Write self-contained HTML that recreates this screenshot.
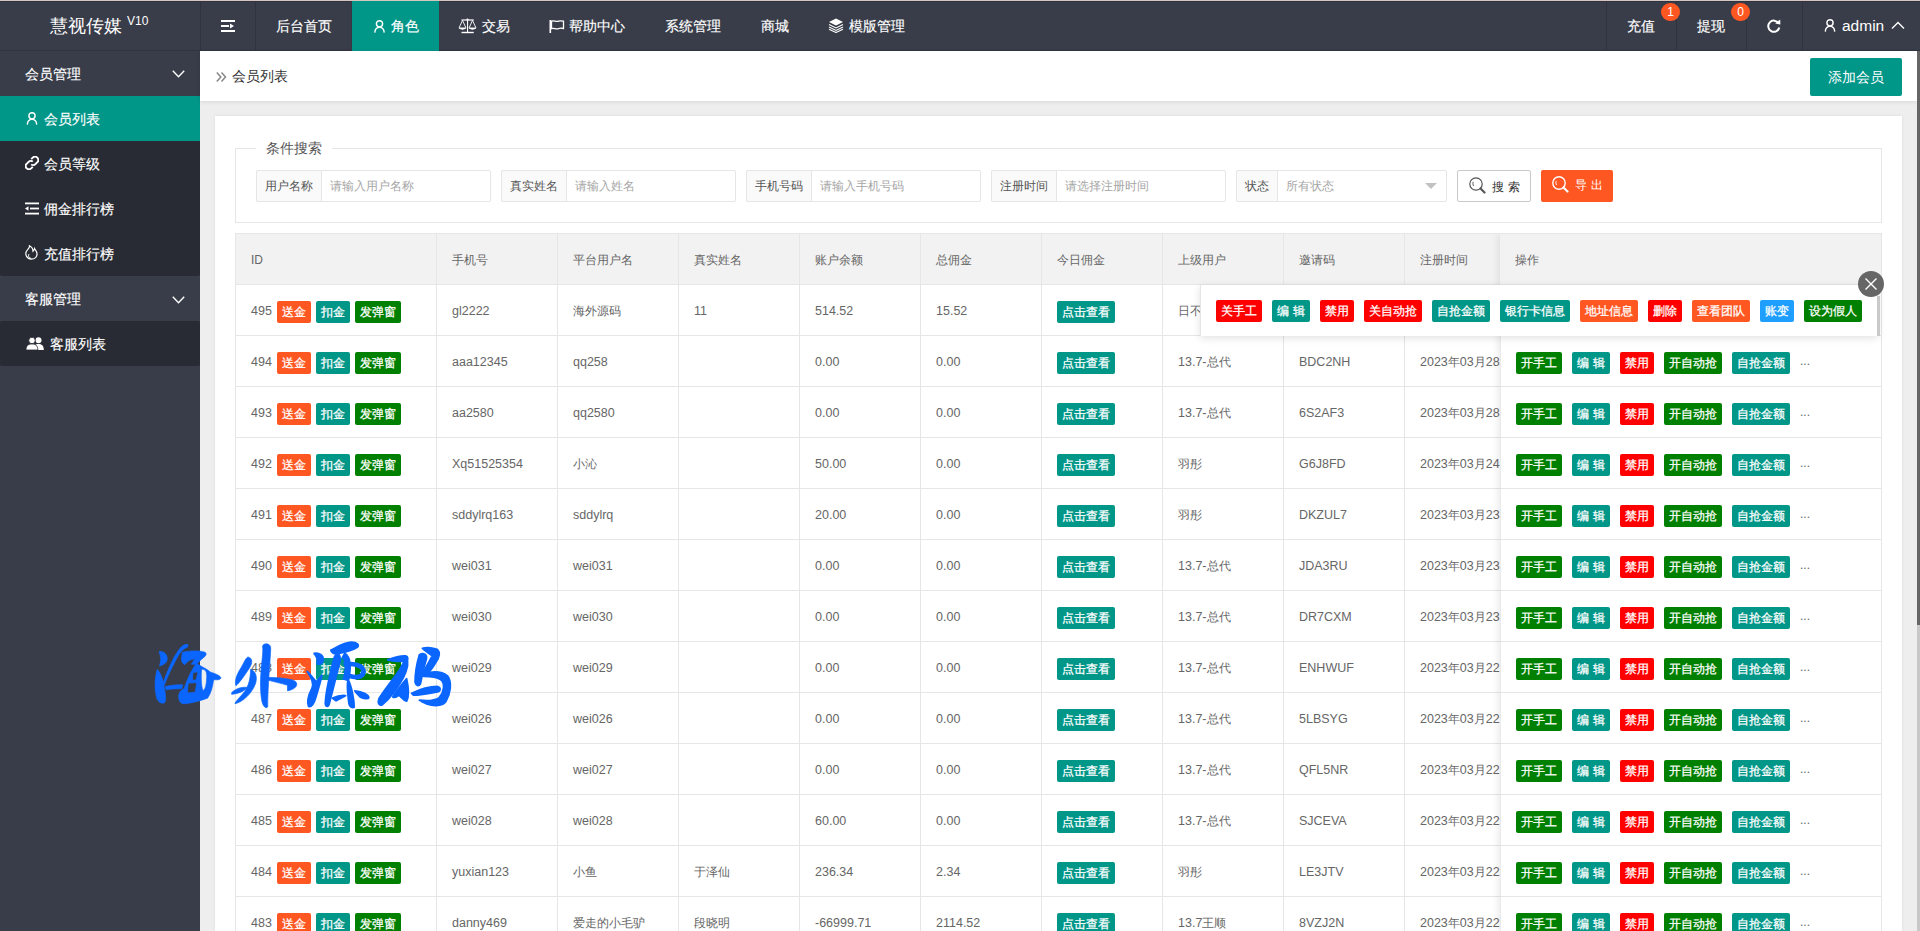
<!DOCTYPE html><html><head><meta charset='utf-8'><style>
*{margin:0;padding:0;box-sizing:border-box}
html,body{width:1920px;height:931px;overflow:hidden}
body{position:relative;background:#eeeeee;font-family:'Liberation Sans', sans-serif;color:#666;}
.a{position:absolute}
.t{position:absolute;white-space:nowrap}
.hd{color:#fff;font-size:14px;line-height:20px;-webkit-text-stroke:0.15px #fff}
.sb{color:#fff;font-size:14px;line-height:20px;-webkit-text-stroke:0.15px #fff}
.btn{position:absolute;height:22px;line-height:22px;font-size:12px;color:#fff;text-align:center;border-radius:2px;white-space:nowrap;-webkit-text-stroke:0.25px #fff}
.cell{position:absolute;font-size:12.5px;line-height:20px;color:#666;white-space:nowrap}
.hcell{position:absolute;font-size:12px;line-height:20px;color:#666;white-space:nowrap}
</style></head><body>
<div class='a' style='left:0;top:0;width:1920px;height:1px;background:#d6c6c0'></div>
<div class='a' style='left:0;top:1px;width:1920px;height:50px;background:#393D49'></div>
<div class='a' style='left:0;top:1px;width:1920px;height:1px;background:#2f3341'></div>
<div class='a' style='left:0;top:50px;width:1920px;height:1px;background:#30343f'></div>
<div class='t' style='left:50px;top:16px;font-size:18px;line-height:20px;color:#fff'>慧视传媒</div>
<div class='t' style='left:127px;top:11px;font-size:12px;line-height:20px;color:#fff'>V10</div>
<div class='a' style='left:200px;top:2px;width:1px;height:48px;background:#30333d'></div>
<div class='a' style='left:255px;top:2px;width:1px;height:48px;background:#30333d'></div>
<div class='a' style='left:1606px;top:2px;width:1px;height:48px;background:#30333d'></div>
<div class='a' style='left:1676px;top:2px;width:1px;height:48px;background:#30333d'></div>
<div class='a' style='left:1746px;top:2px;width:1px;height:48px;background:#30333d'></div>
<div class='a' style='left:1802px;top:2px;width:1px;height:48px;background:#30333d'></div>
<div class='a' style='left:351px;top:1px;width:1px;height:50px;background:#3a3444'></div>
<div class='a' style='left:352px;top:1px;width:87px;height:50px;background:#009688'></div>
<svg class='a' style='left:221px;top:19px' width='15' height='14' viewBox='0 0 15 14'>
<rect x='0' y='1' width='14' height='2' fill='#fff'/><rect x='0' y='6' width='8' height='2' fill='#fff'/>
<path d='M9 4.5 L13 7 L9 9.5Z' fill='#fff'/><rect x='0' y='11' width='14' height='2' fill='#fff'/></svg>
<div class='t hd' style='left:276px;top:16px'>后台首页</div>
<div class='t hd' style='left:391px;top:16px'>角色</div>
<div class='t hd' style='left:482px;top:16px'>交易</div>
<div class='t hd' style='left:569px;top:16px'>帮助中心</div>
<div class='t hd' style='left:665px;top:16px'>系统管理</div>
<div class='t hd' style='left:761px;top:16px'>商城</div>
<div class='t hd' style='left:849px;top:16px'>模版管理</div>
<div class='t hd' style='left:1627px;top:16px'>充值</div>
<div class='t hd' style='left:1697px;top:16px'>提现</div>
<svg class='a' style='left:374px;top:20px' width='11' height='13' viewBox='0 0 11 13'>
<circle cx='5.5' cy='3.8' r='3.1' fill='none' stroke='#fff' stroke-width='1.4'/>
<path d='M0.8 12.6 C1 8.8 3 7.4 5.5 7.4 C8 7.4 10 8.8 10.2 12.6' fill='none' stroke='#fff' stroke-width='1.4'/></svg>
<svg class='a' style='left:458px;top:18px' width='19' height='16' viewBox='0 0 19 16'>
<rect x='3.5' y='1.4' width='12.25' height='1.2' fill='#fff'/><circle cx='9.5' cy='1.6' r='1.1' fill='#fff'/>
<rect x='9' y='2' width='1.1' height='12' fill='#fff'/><rect x='3.5' y='13.8' width='12.25' height='1.4' fill='#fff'/>
<path d='M4.5 2.4 L1 10 H8Z' fill='none' stroke='#fff' stroke-width='0.9'/><path d='M0.6 10 Q4.5 13.4 8.4 10Z' fill='#fff'/>
<path d='M14.5 2.4 L11 10 H18Z' fill='none' stroke='#fff' stroke-width='0.9'/><path d='M10.6 10 Q14.5 13.4 18.4 10Z' fill='#fff'/>
</svg>
<svg class='a' style='left:549px;top:20px' width='16' height='13' viewBox='0 0 16 13'>
<rect x='0.5' y='0' width='1.6' height='13' fill='#fff'/>
<path d='M2.5 1.2 C5 0 7 2.2 9.5 1.2 C11 0.6 12.5 0.8 14.5 1.2 L14.5 8.5 C12.5 8 11 8 9.5 8.6 C7 9.6 5 7.6 2.5 8.6Z' fill='none' stroke='#fff' stroke-width='1.3'/>
</svg>
<svg class='a' style='left:828px;top:18px' width='16' height='15' viewBox='0 0 16 15'>
<path d='M8 0.5 L15 4 L8 7.5 L1 4Z' fill='#fff'/>
<path d='M1 6.5 L8 10 L15 6.5' fill='none' stroke='#fff' stroke-width='1.1'/>
<path d='M1 9 L8 12.5 L15 9' fill='none' stroke='#fff' stroke-width='1.1'/>
<path d='M1 11.2 L8 14.5 L15 11.2' fill='none' stroke='#fff' stroke-width='1.1'/>
</svg>
<div class='a' style='left:1661.0px;top:3px;width:19px;height:18px;border-radius:9.5px;background:#FF5722;color:#fff;font-size:12px;line-height:18px;text-align:center'>1</div>
<div class='a' style='left:1731.0px;top:3px;width:19px;height:18px;border-radius:9.5px;background:#FF5722;color:#fff;font-size:12px;line-height:18px;text-align:center'>0</div>
<svg class='a' style='left:1767px;top:19px' width='14' height='14' viewBox='0 0 14 14'>
<path d='M11.6 4.2 A5.6 5.6 0 1 0 12.3 8.6' fill='none' stroke='#fff' stroke-width='2'/>
<path d='M8.2 4.6 L13.4 5.6 L13.2 0.4Z' fill='#fff'/></svg>
<svg class='a' style='left:1824px;top:19px' width='12' height='13' viewBox='0 0 11 13'>
<circle cx='5.5' cy='3.8' r='3.1' fill='none' stroke='#fff' stroke-width='1.4'/>
<path d='M0.8 12.6 C1 8.8 3 7.4 5.5 7.4 C8 7.4 10 8.8 10.2 12.6' fill='none' stroke='#fff' stroke-width='1.4'/></svg>
<div class='t' style='left:1842px;top:16px;font-size:15.5px;line-height:20px;color:#fff'>admin</div>
<svg class='a' style='left:1891px;top:21px' width='14' height='9' viewBox='0 0 14 9'>
<path d='M1 7.5 L7 1.5 L13 7.5' fill='none' stroke='#fff' stroke-width='1.4'/></svg>
<div class='a' style='left:0;top:51px;width:200px;height:880px;background:#393D49'></div>
<div class='a' style='left:0;top:96px;width:200px;height:180px;background:#282b33;border-radius:2px'></div>
<div class='a' style='left:0;top:96px;width:200px;height:45px;background:#009688'></div>
<div class='a' style='left:0;top:321px;width:200px;height:45px;background:#282b33;border-radius:2px'></div>
<div class='t sb' style='left:25px;top:64px'>会员管理</div>
<svg class='a' style='left:172px;top:70px' width='13' height='8' viewBox='0 0 13 8'>
<path d='M0.8 0.8 L6.5 6.8 L12.2 0.8' fill='none' stroke='#fff' stroke-width='1.4'/></svg>
<div class='t sb' style='left:44px;top:109px'>会员列表</div>
<svg class='a' style='left:26px;top:112px' width='12' height='13' viewBox='0 0 11 13'>
<circle cx='5.5' cy='3.8' r='3.1' fill='none' stroke='#fff' stroke-width='1.4'/>
<path d='M0.8 12.6 C1 8.8 3 7.4 5.5 7.4 C8 7.4 10 8.8 10.2 12.6' fill='none' stroke='#fff' stroke-width='1.4'/></svg>
<div class='t sb' style='left:44px;top:154px'>会员等级</div>
<svg class='a' style='left:25px;top:156px' width='14' height='14' viewBox='0 0 14 14'>
<path d='M6.2 3.2 L7.8 1.6 C9 0.4 11 0.4 12.3 1.7 C13.6 3 13.6 5 12.4 6.2 L10.4 8.2 C9.2 9.4 7.2 9.4 6.2 8.4' fill='none' stroke='#fff' stroke-width='1.9'/>
<path d='M7.8 10.8 L6.2 12.4 C5 13.6 3 13.6 1.7 12.3 C0.4 11 0.4 9 1.6 7.8 L3.6 5.8 C4.8 4.6 6.8 4.6 7.8 5.6' fill='none' stroke='#fff' stroke-width='1.9'/></svg>
<div class='t sb' style='left:44px;top:199px'>佣金排行榜</div>
<svg class='a' style='left:25px;top:202px' width='14' height='13' viewBox='0 0 14 13'>
<rect x='0' y='0.5' width='14' height='1.8' fill='#fff'/><rect x='5' y='5.6' width='9' height='1.8' fill='#fff'/>
<path d='M0 6.5 L3.5 4.2 V8.8Z' fill='#fff'/><rect x='0' y='10.7' width='14' height='1.8' fill='#fff'/></svg>
<div class='t sb' style='left:44px;top:244px'>充值排行榜</div>
<svg class='a' style='left:25px;top:245px' width='13' height='15' viewBox='0 0 13 15'>
<path d='M4.5 0.8 C5 3 2.5 4 1.3 6.5 C0 9.5 1.6 14 6.5 14.2 C11 14.2 12.6 10.5 11.8 7.5 C11.3 5.5 10 4.5 9.5 3.5 C9.2 5 8.8 5.8 8 6.3 C8 3.8 6.8 2 4.5 0.8Z' fill='none' stroke='#fff' stroke-width='1.2'/>
<path d='M4 9 C3 10.5 3.5 13 6.2 13.5' fill='none' stroke='#fff' stroke-width='1'/></svg>
<div class='t sb' style='left:25px;top:289px'>客服管理</div>
<svg class='a' style='left:172px;top:296px' width='13' height='8' viewBox='0 0 13 8'>
<path d='M0.8 0.8 L6.5 6.8 L12.2 0.8' fill='none' stroke='#fff' stroke-width='1.4'/></svg>
<div class='t sb' style='left:50px;top:334px'>客服列表</div>
<svg class='a' style='left:26px;top:337px' width='19' height='13' viewBox='0 0 19 13'>
<circle cx='12.5' cy='3.3' r='3' fill='#fff'/><path d='M7.5 13 C7.5 8.5 9.5 7 12.5 7 C15.5 7 17.8 8.5 17.8 13Z' fill='#fff'/>
<circle cx='6' cy='3.5' r='3.2' fill='#fff' stroke='#282b33' stroke-width='0.8'/><path d='M0 13 C0 8.5 2.5 7 6 7 C9.5 7 11.8 8.5 11.8 13Z' fill='#fff' stroke='#282b33' stroke-width='0.8'/></svg>
<div class='a' style='left:200px;top:51px;width:1717px;height:50px;background:#fff;box-shadow:0 1px 4px rgba(0,0,0,.10)'></div>
<svg class='a' style='left:216px;top:72px' width='11' height='10' viewBox='0 0 11 10'>
<path d='M0.8 0.5 L4.8 5 L0.8 9.5 M5.5 0.5 L9.5 5 L5.5 9.5' fill='none' stroke='#888' stroke-width='1.5'/></svg>
<div class='t' style='left:232px;top:66px;font-size:14px;line-height:20px;color:#333'>会员列表</div>
<div class='a' style='left:1810px;top:58px;width:92px;height:38px;background:#009688;border-radius:2px;color:#fff;font-size:14px;line-height:38px;text-align:center'>添加会员</div>
<div class='a' style='left:215px;top:116px;width:1687px;height:815px;background:#fff;box-shadow:0 0 3px rgba(0,0,0,.08)'></div>
<div class='a' style='left:235px;top:148px;width:1647px;height:75px;border:1px solid #e6e6e6'></div>
<div class='a' style='left:256px;top:140px;width:76px;height:16px;background:#fff'></div>
<div class='t' style='left:266px;top:138px;font-size:14px;line-height:20px;color:#555'>条件搜索</div>
<div class='a' style='left:256px;top:170px;width:235px;height:32px;border:1px solid #e6e6e6;border-radius:2px;background:#fff'></div>
<div class='a' style='left:256px;top:170px;width:66px;height:32px;border:1px solid #e6e6e6;border-radius:2px 0 0 2px;background:#fafafa'></div>
<div class='t' style='left:265px;top:176px;font-size:12px;line-height:20px;color:#555'>用户名称</div>
<div class='t' style='left:330px;top:176px;font-size:12px;line-height:20px;color:#a6a6a6'>请输入用户名称</div>
<div class='a' style='left:501px;top:170px;width:235px;height:32px;border:1px solid #e6e6e6;border-radius:2px;background:#fff'></div>
<div class='a' style='left:501px;top:170px;width:66px;height:32px;border:1px solid #e6e6e6;border-radius:2px 0 0 2px;background:#fafafa'></div>
<div class='t' style='left:510px;top:176px;font-size:12px;line-height:20px;color:#555'>真实姓名</div>
<div class='t' style='left:575px;top:176px;font-size:12px;line-height:20px;color:#a6a6a6'>请输入姓名</div>
<div class='a' style='left:746px;top:170px;width:235px;height:32px;border:1px solid #e6e6e6;border-radius:2px;background:#fff'></div>
<div class='a' style='left:746px;top:170px;width:66px;height:32px;border:1px solid #e6e6e6;border-radius:2px 0 0 2px;background:#fafafa'></div>
<div class='t' style='left:755px;top:176px;font-size:12px;line-height:20px;color:#555'>手机号码</div>
<div class='t' style='left:820px;top:176px;font-size:12px;line-height:20px;color:#a6a6a6'>请输入手机号码</div>
<div class='a' style='left:991px;top:170px;width:235px;height:32px;border:1px solid #e6e6e6;border-radius:2px;background:#fff'></div>
<div class='a' style='left:991px;top:170px;width:66px;height:32px;border:1px solid #e6e6e6;border-radius:2px 0 0 2px;background:#fafafa'></div>
<div class='t' style='left:1000px;top:176px;font-size:12px;line-height:20px;color:#555'>注册时间</div>
<div class='t' style='left:1065px;top:176px;font-size:12px;line-height:20px;color:#a6a6a6'>请选择注册时间</div>
<div class='a' style='left:1236px;top:170px;width:211px;height:32px;border:1px solid #e6e6e6;border-radius:2px;background:#fff'></div>
<div class='a' style='left:1236px;top:170px;width:42px;height:32px;border:1px solid #e6e6e6;border-radius:2px 0 0 2px;background:#fafafa'></div>
<div class='t' style='left:1245px;top:176px;font-size:12px;line-height:20px;color:#555'>状态</div>
<div class='t' style='left:1286px;top:176px;font-size:12px;line-height:20px;color:#a6a6a6'>所有状态</div>
<svg class='a' style='left:1425px;top:183px' width='12' height='6' viewBox='0 0 12 6'><path d='M0 0 H12 L6 6Z' fill='#c2c2c2'/></svg>
<div class='a' style='left:1457px;top:170px;width:74px;height:32px;border:1px solid #c9c9c9;border-radius:2px;background:#fff'></div>
<svg class='a' style='left:1469px;top:177px' width='17' height='17' viewBox='0 0 17 17'>
<circle cx='7' cy='7' r='6.2' fill='none' stroke='#555' stroke-width='1.2'/>
<path d='M11.5 11.5 L15.5 15.5' stroke='#555' stroke-width='2.2' stroke-linecap='round'/>
<path d='M4.2 4.8 Q3.2 7 4.6 9' fill='none' stroke='#555' stroke-width='0.9'/></svg>
<div class='t' style='left:1492px;top:177px;font-size:12px;line-height:20px;color:#333;letter-spacing:4px'>搜索</div>
<div class='a' style='left:1541px;top:170px;width:72px;height:32px;border-radius:2px;background:#FF5722'></div>
<svg class='a' style='left:1552px;top:176px' width='17' height='17' viewBox='0 0 17 17'>
<circle cx='7' cy='7' r='6.2' fill='none' stroke='#fff' stroke-width='1.4'/>
<path d='M11.5 11.5 L15.5 15.5' stroke='#fff' stroke-width='2.2' stroke-linecap='round'/>
<path d='M4.2 4.8 Q3.2 7 4.6 9' fill='none' stroke='#fff' stroke-width='0.9'/></svg>
<div class='t' style='left:1575px;top:175px;font-size:12px;line-height:20px;color:#fff;letter-spacing:4px'>导出</div>
<div class='a' style='left:235px;top:233px;width:1647px;height:698px;border:1px solid #e6e6e6;border-bottom:none;background:#fff;overflow:hidden'>
<div class='a' style='left:0;top:0;width:100%;height:50px;background:#f2f2f2'></div>
<div class='a' style='left:0;top:50px;width:100%;height:1px;background:#e6e6e6'></div>
<div class='a' style='left:0;top:101px;width:100%;height:1px;background:#e6e6e6'></div>
<div class='a' style='left:0;top:152px;width:100%;height:1px;background:#e6e6e6'></div>
<div class='a' style='left:0;top:203px;width:100%;height:1px;background:#e6e6e6'></div>
<div class='a' style='left:0;top:254px;width:100%;height:1px;background:#e6e6e6'></div>
<div class='a' style='left:0;top:305px;width:100%;height:1px;background:#e6e6e6'></div>
<div class='a' style='left:0;top:356px;width:100%;height:1px;background:#e6e6e6'></div>
<div class='a' style='left:0;top:407px;width:100%;height:1px;background:#e6e6e6'></div>
<div class='a' style='left:0;top:458px;width:100%;height:1px;background:#e6e6e6'></div>
<div class='a' style='left:0;top:509px;width:100%;height:1px;background:#e6e6e6'></div>
<div class='a' style='left:0;top:560px;width:100%;height:1px;background:#e6e6e6'></div>
<div class='a' style='left:0;top:611px;width:100%;height:1px;background:#e6e6e6'></div>
<div class='a' style='left:0;top:662px;width:100%;height:1px;background:#e6e6e6'></div>
<div class='a' style='left:0;top:713px;width:100%;height:1px;background:#e6e6e6'></div>
<div class='a' style='left:200px;top:0;width:1px;height:100%;background:#e6e6e6'></div>
<div class='a' style='left:321px;top:0;width:1px;height:100%;background:#e6e6e6'></div>
<div class='a' style='left:442px;top:0;width:1px;height:100%;background:#e6e6e6'></div>
<div class='a' style='left:563px;top:0;width:1px;height:100%;background:#e6e6e6'></div>
<div class='a' style='left:684px;top:0;width:1px;height:100%;background:#e6e6e6'></div>
<div class='a' style='left:805px;top:0;width:1px;height:100%;background:#e6e6e6'></div>
<div class='a' style='left:926px;top:0;width:1px;height:100%;background:#e6e6e6'></div>
<div class='a' style='left:1047px;top:0;width:1px;height:100%;background:#e6e6e6'></div>
<div class='a' style='left:1168px;top:0;width:1px;height:100%;background:#e6e6e6'></div>
<div class='a' style='left:1289px;top:0;width:1px;height:100%;background:#e6e6e6'></div>
<div class='hcell' style='left:15px;top:16px'>ID</div>
<div class='hcell' style='left:216px;top:16px'>手机号</div>
<div class='hcell' style='left:337px;top:16px'>平台用户名</div>
<div class='hcell' style='left:458px;top:16px'>真实姓名</div>
<div class='hcell' style='left:579px;top:16px'>账户余额</div>
<div class='hcell' style='left:700px;top:16px'>总佣金</div>
<div class='hcell' style='left:821px;top:16px'>今日佣金</div>
<div class='hcell' style='left:942px;top:16px'>上级用户</div>
<div class='hcell' style='left:1063px;top:16px'>邀请码</div>
<div class='hcell' style='left:1184px;top:16px'>注册时间</div>
<div class='cell' style='left:15px;top:67px'>495</div>
<div class='btn' style='left:41px;top:67px;width:34px;background:#FF5722'>送金</div>
<div class='btn' style='left:80px;top:67px;width:34px;background:#009688'>扣金</div>
<div class='btn' style='left:119px;top:67px;width:46px;background:#008000'>发弹窗</div>
<div class='cell' style='left:216px;top:67px'>gl2222</div>
<div class='cell' style='left:337px;top:67px'><span style='font-size:12px'>海外源码</span></div>
<div class='cell' style='left:458px;top:67px'>11</div>
<div class='cell' style='left:579px;top:67px'>514.52</div>
<div class='cell' style='left:700px;top:67px'>15.52</div>
<div class='btn' style='left:821px;top:67px;width:58px;background:#009688'>点击查看</div>
<div class='cell' style='left:942px;top:67px'><span style='font-size:12px'>日不落</span></div>
<div class='cell' style='left:15px;top:118px'>494</div>
<div class='btn' style='left:41px;top:118px;width:34px;background:#FF5722'>送金</div>
<div class='btn' style='left:80px;top:118px;width:34px;background:#009688'>扣金</div>
<div class='btn' style='left:119px;top:118px;width:46px;background:#008000'>发弹窗</div>
<div class='cell' style='left:216px;top:118px'>aaa12345</div>
<div class='cell' style='left:337px;top:118px'>qq258</div>
<div class='cell' style='left:579px;top:118px'>0.00</div>
<div class='cell' style='left:700px;top:118px'>0.00</div>
<div class='btn' style='left:821px;top:118px;width:58px;background:#009688'>点击查看</div>
<div class='cell' style='left:942px;top:118px'>13.7-<span style='font-size:12px'>总代</span></div>
<div class='cell' style='left:1063px;top:118px'>BDC2NH</div>
<div class='cell' style='left:1184px;top:118px'>2023<span style='font-size:12px'>年</span>03<span style='font-size:12px'>月</span>28</div>
<div class='cell' style='left:15px;top:169px'>493</div>
<div class='btn' style='left:41px;top:169px;width:34px;background:#FF5722'>送金</div>
<div class='btn' style='left:80px;top:169px;width:34px;background:#009688'>扣金</div>
<div class='btn' style='left:119px;top:169px;width:46px;background:#008000'>发弹窗</div>
<div class='cell' style='left:216px;top:169px'>aa2580</div>
<div class='cell' style='left:337px;top:169px'>qq2580</div>
<div class='cell' style='left:579px;top:169px'>0.00</div>
<div class='cell' style='left:700px;top:169px'>0.00</div>
<div class='btn' style='left:821px;top:169px;width:58px;background:#009688'>点击查看</div>
<div class='cell' style='left:942px;top:169px'>13.7-<span style='font-size:12px'>总代</span></div>
<div class='cell' style='left:1063px;top:169px'>6S2AF3</div>
<div class='cell' style='left:1184px;top:169px'>2023<span style='font-size:12px'>年</span>03<span style='font-size:12px'>月</span>28</div>
<div class='cell' style='left:15px;top:220px'>492</div>
<div class='btn' style='left:41px;top:220px;width:34px;background:#FF5722'>送金</div>
<div class='btn' style='left:80px;top:220px;width:34px;background:#009688'>扣金</div>
<div class='btn' style='left:119px;top:220px;width:46px;background:#008000'>发弹窗</div>
<div class='cell' style='left:216px;top:220px'>Xq51525354</div>
<div class='cell' style='left:337px;top:220px'><span style='font-size:12px'>小沁</span></div>
<div class='cell' style='left:579px;top:220px'>50.00</div>
<div class='cell' style='left:700px;top:220px'>0.00</div>
<div class='btn' style='left:821px;top:220px;width:58px;background:#009688'>点击查看</div>
<div class='cell' style='left:942px;top:220px'><span style='font-size:12px'>羽彤</span></div>
<div class='cell' style='left:1063px;top:220px'>G6J8FD</div>
<div class='cell' style='left:1184px;top:220px'>2023<span style='font-size:12px'>年</span>03<span style='font-size:12px'>月</span>24</div>
<div class='cell' style='left:15px;top:271px'>491</div>
<div class='btn' style='left:41px;top:271px;width:34px;background:#FF5722'>送金</div>
<div class='btn' style='left:80px;top:271px;width:34px;background:#009688'>扣金</div>
<div class='btn' style='left:119px;top:271px;width:46px;background:#008000'>发弹窗</div>
<div class='cell' style='left:216px;top:271px'>sddylrq163</div>
<div class='cell' style='left:337px;top:271px'>sddylrq</div>
<div class='cell' style='left:579px;top:271px'>20.00</div>
<div class='cell' style='left:700px;top:271px'>0.00</div>
<div class='btn' style='left:821px;top:271px;width:58px;background:#009688'>点击查看</div>
<div class='cell' style='left:942px;top:271px'><span style='font-size:12px'>羽彤</span></div>
<div class='cell' style='left:1063px;top:271px'>DKZUL7</div>
<div class='cell' style='left:1184px;top:271px'>2023<span style='font-size:12px'>年</span>03<span style='font-size:12px'>月</span>23</div>
<div class='cell' style='left:15px;top:322px'>490</div>
<div class='btn' style='left:41px;top:322px;width:34px;background:#FF5722'>送金</div>
<div class='btn' style='left:80px;top:322px;width:34px;background:#009688'>扣金</div>
<div class='btn' style='left:119px;top:322px;width:46px;background:#008000'>发弹窗</div>
<div class='cell' style='left:216px;top:322px'>wei031</div>
<div class='cell' style='left:337px;top:322px'>wei031</div>
<div class='cell' style='left:579px;top:322px'>0.00</div>
<div class='cell' style='left:700px;top:322px'>0.00</div>
<div class='btn' style='left:821px;top:322px;width:58px;background:#009688'>点击查看</div>
<div class='cell' style='left:942px;top:322px'>13.7-<span style='font-size:12px'>总代</span></div>
<div class='cell' style='left:1063px;top:322px'>JDA3RU</div>
<div class='cell' style='left:1184px;top:322px'>2023<span style='font-size:12px'>年</span>03<span style='font-size:12px'>月</span>23</div>
<div class='cell' style='left:15px;top:373px'>489</div>
<div class='btn' style='left:41px;top:373px;width:34px;background:#FF5722'>送金</div>
<div class='btn' style='left:80px;top:373px;width:34px;background:#009688'>扣金</div>
<div class='btn' style='left:119px;top:373px;width:46px;background:#008000'>发弹窗</div>
<div class='cell' style='left:216px;top:373px'>wei030</div>
<div class='cell' style='left:337px;top:373px'>wei030</div>
<div class='cell' style='left:579px;top:373px'>0.00</div>
<div class='cell' style='left:700px;top:373px'>0.00</div>
<div class='btn' style='left:821px;top:373px;width:58px;background:#009688'>点击查看</div>
<div class='cell' style='left:942px;top:373px'>13.7-<span style='font-size:12px'>总代</span></div>
<div class='cell' style='left:1063px;top:373px'>DR7CXM</div>
<div class='cell' style='left:1184px;top:373px'>2023<span style='font-size:12px'>年</span>03<span style='font-size:12px'>月</span>23</div>
<div class='cell' style='left:15px;top:424px'>488</div>
<div class='btn' style='left:41px;top:424px;width:34px;background:#FF5722'>送金</div>
<div class='btn' style='left:80px;top:424px;width:34px;background:#009688'>扣金</div>
<div class='btn' style='left:119px;top:424px;width:46px;background:#008000'>发弹窗</div>
<div class='cell' style='left:216px;top:424px'>wei029</div>
<div class='cell' style='left:337px;top:424px'>wei029</div>
<div class='cell' style='left:579px;top:424px'>0.00</div>
<div class='cell' style='left:700px;top:424px'>0.00</div>
<div class='btn' style='left:821px;top:424px;width:58px;background:#009688'>点击查看</div>
<div class='cell' style='left:942px;top:424px'>13.7-<span style='font-size:12px'>总代</span></div>
<div class='cell' style='left:1063px;top:424px'>ENHWUF</div>
<div class='cell' style='left:1184px;top:424px'>2023<span style='font-size:12px'>年</span>03<span style='font-size:12px'>月</span>22</div>
<div class='cell' style='left:15px;top:475px'>487</div>
<div class='btn' style='left:41px;top:475px;width:34px;background:#FF5722'>送金</div>
<div class='btn' style='left:80px;top:475px;width:34px;background:#009688'>扣金</div>
<div class='btn' style='left:119px;top:475px;width:46px;background:#008000'>发弹窗</div>
<div class='cell' style='left:216px;top:475px'>wei026</div>
<div class='cell' style='left:337px;top:475px'>wei026</div>
<div class='cell' style='left:579px;top:475px'>0.00</div>
<div class='cell' style='left:700px;top:475px'>0.00</div>
<div class='btn' style='left:821px;top:475px;width:58px;background:#009688'>点击查看</div>
<div class='cell' style='left:942px;top:475px'>13.7-<span style='font-size:12px'>总代</span></div>
<div class='cell' style='left:1063px;top:475px'>5LBSYG</div>
<div class='cell' style='left:1184px;top:475px'>2023<span style='font-size:12px'>年</span>03<span style='font-size:12px'>月</span>22</div>
<div class='cell' style='left:15px;top:526px'>486</div>
<div class='btn' style='left:41px;top:526px;width:34px;background:#FF5722'>送金</div>
<div class='btn' style='left:80px;top:526px;width:34px;background:#009688'>扣金</div>
<div class='btn' style='left:119px;top:526px;width:46px;background:#008000'>发弹窗</div>
<div class='cell' style='left:216px;top:526px'>wei027</div>
<div class='cell' style='left:337px;top:526px'>wei027</div>
<div class='cell' style='left:579px;top:526px'>0.00</div>
<div class='cell' style='left:700px;top:526px'>0.00</div>
<div class='btn' style='left:821px;top:526px;width:58px;background:#009688'>点击查看</div>
<div class='cell' style='left:942px;top:526px'>13.7-<span style='font-size:12px'>总代</span></div>
<div class='cell' style='left:1063px;top:526px'>QFL5NR</div>
<div class='cell' style='left:1184px;top:526px'>2023<span style='font-size:12px'>年</span>03<span style='font-size:12px'>月</span>22</div>
<div class='cell' style='left:15px;top:577px'>485</div>
<div class='btn' style='left:41px;top:577px;width:34px;background:#FF5722'>送金</div>
<div class='btn' style='left:80px;top:577px;width:34px;background:#009688'>扣金</div>
<div class='btn' style='left:119px;top:577px;width:46px;background:#008000'>发弹窗</div>
<div class='cell' style='left:216px;top:577px'>wei028</div>
<div class='cell' style='left:337px;top:577px'>wei028</div>
<div class='cell' style='left:579px;top:577px'>60.00</div>
<div class='cell' style='left:700px;top:577px'>0.00</div>
<div class='btn' style='left:821px;top:577px;width:58px;background:#009688'>点击查看</div>
<div class='cell' style='left:942px;top:577px'>13.7-<span style='font-size:12px'>总代</span></div>
<div class='cell' style='left:1063px;top:577px'>SJCEVA</div>
<div class='cell' style='left:1184px;top:577px'>2023<span style='font-size:12px'>年</span>03<span style='font-size:12px'>月</span>22</div>
<div class='cell' style='left:15px;top:628px'>484</div>
<div class='btn' style='left:41px;top:628px;width:34px;background:#FF5722'>送金</div>
<div class='btn' style='left:80px;top:628px;width:34px;background:#009688'>扣金</div>
<div class='btn' style='left:119px;top:628px;width:46px;background:#008000'>发弹窗</div>
<div class='cell' style='left:216px;top:628px'>yuxian123</div>
<div class='cell' style='left:337px;top:628px'><span style='font-size:12px'>小鱼</span></div>
<div class='cell' style='left:458px;top:628px'><span style='font-size:12px'>于泽仙</span></div>
<div class='cell' style='left:579px;top:628px'>236.34</div>
<div class='cell' style='left:700px;top:628px'>2.34</div>
<div class='btn' style='left:821px;top:628px;width:58px;background:#009688'>点击查看</div>
<div class='cell' style='left:942px;top:628px'><span style='font-size:12px'>羽彤</span></div>
<div class='cell' style='left:1063px;top:628px'>LE3JTV</div>
<div class='cell' style='left:1184px;top:628px'>2023<span style='font-size:12px'>年</span>03<span style='font-size:12px'>月</span>22</div>
<div class='cell' style='left:15px;top:679px'>483</div>
<div class='btn' style='left:41px;top:679px;width:34px;background:#FF5722'>送金</div>
<div class='btn' style='left:80px;top:679px;width:34px;background:#009688'>扣金</div>
<div class='btn' style='left:119px;top:679px;width:46px;background:#008000'>发弹窗</div>
<div class='cell' style='left:216px;top:679px'>danny469</div>
<div class='cell' style='left:337px;top:679px'><span style='font-size:12px'>爱走的小毛驴</span></div>
<div class='cell' style='left:458px;top:679px'><span style='font-size:12px'>段晓明</span></div>
<div class='cell' style='left:579px;top:679px'>-66999.71</div>
<div class='cell' style='left:700px;top:679px'>2114.52</div>
<div class='btn' style='left:821px;top:679px;width:58px;background:#009688'>点击查看</div>
<div class='cell' style='left:942px;top:679px'>13.7<span style='font-size:12px'>王顺</span></div>
<div class='cell' style='left:1063px;top:679px'>8VZJ2N</div>
<div class='cell' style='left:1184px;top:679px'>2023<span style='font-size:12px'>年</span>03<span style='font-size:12px'>月</span>22</div>
<div class='a' style='left:1264px;top:0;width:381px;height:697px;background:#fff;box-shadow:-1px 0 8px rgba(0,0,0,.10);overflow:hidden'>
<div class='a' style='left:0;top:0;width:1px;height:100%;background:#eaeaea'></div>
<div class='a' style='left:0;top:0;width:100%;height:50px;background:#f2f2f2'></div>
<div class='a' style='left:0;top:50px;width:100%;height:1px;background:#e6e6e6'></div>
<div class='a' style='left:0;top:101px;width:100%;height:1px;background:#e6e6e6'></div>
<div class='a' style='left:0;top:152px;width:100%;height:1px;background:#e6e6e6'></div>
<div class='a' style='left:0;top:203px;width:100%;height:1px;background:#e6e6e6'></div>
<div class='a' style='left:0;top:254px;width:100%;height:1px;background:#e6e6e6'></div>
<div class='a' style='left:0;top:305px;width:100%;height:1px;background:#e6e6e6'></div>
<div class='a' style='left:0;top:356px;width:100%;height:1px;background:#e6e6e6'></div>
<div class='a' style='left:0;top:407px;width:100%;height:1px;background:#e6e6e6'></div>
<div class='a' style='left:0;top:458px;width:100%;height:1px;background:#e6e6e6'></div>
<div class='a' style='left:0;top:509px;width:100%;height:1px;background:#e6e6e6'></div>
<div class='a' style='left:0;top:560px;width:100%;height:1px;background:#e6e6e6'></div>
<div class='a' style='left:0;top:611px;width:100%;height:1px;background:#e6e6e6'></div>
<div class='a' style='left:0;top:662px;width:100%;height:1px;background:#e6e6e6'></div>
<div class='a' style='left:0;top:713px;width:100%;height:1px;background:#e6e6e6'></div>
<div class='hcell' style='left:15px;top:16px'>操作</div>
<div class='btn' style='left:16px;top:118px;width:46px;background:#008000'>开手工</div>
<div class='btn' style='left:72px;top:118px;width:38px;background:#009688'>编&nbsp;辑</div>
<div class='btn' style='left:120px;top:118px;width:34px;background:#FF0000'>禁用</div>
<div class='btn' style='left:164px;top:118px;width:58px;background:#008000'>开自动抢</div>
<div class='btn' style='left:232px;top:118px;width:58px;background:#009688'>自抢金额</div>
<div class='cell' style='left:300px;top:117px;font-size:12px;color:#666'>...</div>
<div class='btn' style='left:16px;top:169px;width:46px;background:#008000'>开手工</div>
<div class='btn' style='left:72px;top:169px;width:38px;background:#009688'>编&nbsp;辑</div>
<div class='btn' style='left:120px;top:169px;width:34px;background:#FF0000'>禁用</div>
<div class='btn' style='left:164px;top:169px;width:58px;background:#008000'>开自动抢</div>
<div class='btn' style='left:232px;top:169px;width:58px;background:#009688'>自抢金额</div>
<div class='cell' style='left:300px;top:168px;font-size:12px;color:#666'>...</div>
<div class='btn' style='left:16px;top:220px;width:46px;background:#008000'>开手工</div>
<div class='btn' style='left:72px;top:220px;width:38px;background:#009688'>编&nbsp;辑</div>
<div class='btn' style='left:120px;top:220px;width:34px;background:#FF0000'>禁用</div>
<div class='btn' style='left:164px;top:220px;width:58px;background:#008000'>开自动抢</div>
<div class='btn' style='left:232px;top:220px;width:58px;background:#009688'>自抢金额</div>
<div class='cell' style='left:300px;top:219px;font-size:12px;color:#666'>...</div>
<div class='btn' style='left:16px;top:271px;width:46px;background:#008000'>开手工</div>
<div class='btn' style='left:72px;top:271px;width:38px;background:#009688'>编&nbsp;辑</div>
<div class='btn' style='left:120px;top:271px;width:34px;background:#FF0000'>禁用</div>
<div class='btn' style='left:164px;top:271px;width:58px;background:#008000'>开自动抢</div>
<div class='btn' style='left:232px;top:271px;width:58px;background:#009688'>自抢金额</div>
<div class='cell' style='left:300px;top:270px;font-size:12px;color:#666'>...</div>
<div class='btn' style='left:16px;top:322px;width:46px;background:#008000'>开手工</div>
<div class='btn' style='left:72px;top:322px;width:38px;background:#009688'>编&nbsp;辑</div>
<div class='btn' style='left:120px;top:322px;width:34px;background:#FF0000'>禁用</div>
<div class='btn' style='left:164px;top:322px;width:58px;background:#008000'>开自动抢</div>
<div class='btn' style='left:232px;top:322px;width:58px;background:#009688'>自抢金额</div>
<div class='cell' style='left:300px;top:321px;font-size:12px;color:#666'>...</div>
<div class='btn' style='left:16px;top:373px;width:46px;background:#008000'>开手工</div>
<div class='btn' style='left:72px;top:373px;width:38px;background:#009688'>编&nbsp;辑</div>
<div class='btn' style='left:120px;top:373px;width:34px;background:#FF0000'>禁用</div>
<div class='btn' style='left:164px;top:373px;width:58px;background:#008000'>开自动抢</div>
<div class='btn' style='left:232px;top:373px;width:58px;background:#009688'>自抢金额</div>
<div class='cell' style='left:300px;top:372px;font-size:12px;color:#666'>...</div>
<div class='btn' style='left:16px;top:424px;width:46px;background:#008000'>开手工</div>
<div class='btn' style='left:72px;top:424px;width:38px;background:#009688'>编&nbsp;辑</div>
<div class='btn' style='left:120px;top:424px;width:34px;background:#FF0000'>禁用</div>
<div class='btn' style='left:164px;top:424px;width:58px;background:#008000'>开自动抢</div>
<div class='btn' style='left:232px;top:424px;width:58px;background:#009688'>自抢金额</div>
<div class='cell' style='left:300px;top:423px;font-size:12px;color:#666'>...</div>
<div class='btn' style='left:16px;top:475px;width:46px;background:#008000'>开手工</div>
<div class='btn' style='left:72px;top:475px;width:38px;background:#009688'>编&nbsp;辑</div>
<div class='btn' style='left:120px;top:475px;width:34px;background:#FF0000'>禁用</div>
<div class='btn' style='left:164px;top:475px;width:58px;background:#008000'>开自动抢</div>
<div class='btn' style='left:232px;top:475px;width:58px;background:#009688'>自抢金额</div>
<div class='cell' style='left:300px;top:474px;font-size:12px;color:#666'>...</div>
<div class='btn' style='left:16px;top:526px;width:46px;background:#008000'>开手工</div>
<div class='btn' style='left:72px;top:526px;width:38px;background:#009688'>编&nbsp;辑</div>
<div class='btn' style='left:120px;top:526px;width:34px;background:#FF0000'>禁用</div>
<div class='btn' style='left:164px;top:526px;width:58px;background:#008000'>开自动抢</div>
<div class='btn' style='left:232px;top:526px;width:58px;background:#009688'>自抢金额</div>
<div class='cell' style='left:300px;top:525px;font-size:12px;color:#666'>...</div>
<div class='btn' style='left:16px;top:577px;width:46px;background:#008000'>开手工</div>
<div class='btn' style='left:72px;top:577px;width:38px;background:#009688'>编&nbsp;辑</div>
<div class='btn' style='left:120px;top:577px;width:34px;background:#FF0000'>禁用</div>
<div class='btn' style='left:164px;top:577px;width:58px;background:#008000'>开自动抢</div>
<div class='btn' style='left:232px;top:577px;width:58px;background:#009688'>自抢金额</div>
<div class='cell' style='left:300px;top:576px;font-size:12px;color:#666'>...</div>
<div class='btn' style='left:16px;top:628px;width:46px;background:#008000'>开手工</div>
<div class='btn' style='left:72px;top:628px;width:38px;background:#009688'>编&nbsp;辑</div>
<div class='btn' style='left:120px;top:628px;width:34px;background:#FF0000'>禁用</div>
<div class='btn' style='left:164px;top:628px;width:58px;background:#008000'>开自动抢</div>
<div class='btn' style='left:232px;top:628px;width:58px;background:#009688'>自抢金额</div>
<div class='cell' style='left:300px;top:627px;font-size:12px;color:#666'>...</div>
<div class='btn' style='left:16px;top:679px;width:46px;background:#008000'>开手工</div>
<div class='btn' style='left:72px;top:679px;width:38px;background:#009688'>编&nbsp;辑</div>
<div class='btn' style='left:120px;top:679px;width:34px;background:#FF0000'>禁用</div>
<div class='btn' style='left:164px;top:679px;width:58px;background:#008000'>开自动抢</div>
<div class='btn' style='left:232px;top:679px;width:58px;background:#009688'>自抢金额</div>
<div class='cell' style='left:300px;top:678px;font-size:12px;color:#666'>...</div>
</div>
</div>
<div class='a' style='left:1200px;top:285px;width:678px;height:51px;background:#fff;border-left:1px solid #e4e4e4;box-shadow:0 2px 8px rgba(0,0,0,.12)'></div>
<div class='a' style='left:1877px;top:296px;width:3px;height:40px;background:#c9c9c9'></div>
<div class='btn' style='left:1216px;top:300px;width:46px;background:#FF0000'>关手工</div>
<div class='btn' style='left:1272px;top:300px;width:38px;background:#009688'>编&nbsp;辑</div>
<div class='btn' style='left:1320px;top:300px;width:34px;background:#FF0000'>禁用</div>
<div class='btn' style='left:1364px;top:300px;width:58px;background:#FF0000'>关自动抢</div>
<div class='btn' style='left:1432px;top:300px;width:58px;background:#009688'>自抢金额</div>
<div class='btn' style='left:1500px;top:300px;width:70px;background:#009688'>银行卡信息</div>
<div class='btn' style='left:1580px;top:300px;width:58px;background:#FF5722'>地址信息</div>
<div class='btn' style='left:1648px;top:300px;width:34px;background:#FF0000'>删除</div>
<div class='btn' style='left:1692px;top:300px;width:58px;background:#FF5722'>查看团队</div>
<div class='btn' style='left:1760px;top:300px;width:34px;background:#1E9FFF'>账变</div>
<div class='btn' style='left:1804px;top:300px;width:58px;background:#008000'>设为假人</div>
<svg class='a' style='left:1858px;top:271px' width='26' height='26' viewBox='0 0 26 26'>
<circle cx='13' cy='13' r='13' fill='#666'/><path d='M7.5 7.5 L18.5 18.5 M18.5 7.5 L7.5 18.5' stroke='#fff' stroke-width='1.4'/></svg>
<svg class='a' style='left:150px;top:635px' width='160' height='80' viewBox='0 0 1862 931'><g fill='#0a66ff' stroke='#0a66ff' stroke-width='8' stroke-linejoin='round'>
<path d='M105,195 C160,180 205,230 200,285 C195,330 150,350 110,360 C130,310 130,250 105,195Z'/>
<path d='M85,400 C60,480 45,620 80,740 C100,790 150,810 175,780 C190,740 175,650 160,590 C150,520 130,450 85,400Z'/>
<path d='M440,110 C380,100 330,170 270,280 C220,380 170,500 140,600 L158,605 C205,480 275,330 335,230 C375,170 410,150 440,140Z'/>
<path d='M180,600 C250,585 320,575 380,580 L370,625 C300,625 240,630 185,635Z'/>
<path d='M380,200 C450,185 560,175 640,200 C665,215 650,245 620,265 C590,290 560,320 540,340 L480,340 C500,310 515,290 520,275 C470,280 430,310 405,345 C370,330 360,290 370,250 C375,225 370,210 380,200Z'/>
<path fill-rule='evenodd' d='M540,330 C580,360 640,380 700,430 C760,450 810,470 825,495 C825,520 790,525 740,520 C730,600 710,680 670,735 C600,760 500,790 400,800 C350,800 330,760 335,700 C340,660 370,640 400,620 C420,560 460,440 540,330Z
M500,435 L560,430 L535,525 L495,525Z M445,560 L545,555 L525,665 L435,675Z M600,400 C645,390 665,430 660,500 C655,580 645,640 615,645 C598,600 592,500 600,400Z'/>
<path d='M1140,255 C1200,270 1190,330 1160,380 C1100,470 1040,560 1000,590 C985,540 1000,470 1060,380 C1090,330 1110,270 1140,255Z'/>
<path d='M1170,400 C1230,420 1250,480 1230,560 C1190,680 1080,780 990,800 C980,790 1050,720 1100,660 C1150,590 1170,500 1170,400Z'/>
<path d='M950,670 C1000,620 1080,600 1130,610 C1110,645 1030,685 950,690Z'/>
<path d='M1310,130 C1320,90 1400,90 1405,150 C1400,300 1370,600 1370,830 C1365,860 1330,850 1310,800 C1290,740 1280,600 1290,450 C1300,300 1320,200 1310,130Z'/>
<path d='M1370,495 C1450,490 1550,500 1650,520 C1730,540 1740,620 1600,650 L1600,585 C1530,565 1450,545 1370,525Z'/>
</g></svg>
<svg class='a' style='left:300px;top:635px' width='160' height='80' viewBox='0 0 1862 931'><g fill='#0a66ff' stroke='#0a66ff' stroke-width='22' stroke-linejoin='round'>
<path d='M165,215 C220,200 275,240 270,290 C265,330 235,345 200,335 C210,290 200,250 165,215Z'/>
<path d='M85,425 C130,470 160,520 190,545 L255,470 C235,560 205,650 185,720 C165,790 135,840 100,830 C80,780 100,700 140,620 C160,580 150,520 85,425Z'/>
<path d='M360,175 C420,150 500,90 600,85 C660,85 690,110 670,140 C620,180 520,200 440,215 C400,222 360,210 360,175Z'/>
<path d='M430,210 C470,230 480,260 460,330 C420,480 380,650 340,800 C330,840 300,840 295,800 C300,650 350,450 400,260Z'/>
<path d='M500,230 C570,270 570,400 530,530' fill='none' stroke='#0a66ff' stroke-width='75'/>
<path d='M510,350 C600,320 750,350 740,430 C730,500 650,500 560,470' fill='none' stroke='#0a66ff' stroke-width='55'/>
<path d='M560,520 C600,600 630,750 630,840 C600,850 580,830 570,800 C560,700 540,600 560,520Z'/>
<path d='M640,650 C720,660 800,690 800,730 C790,750 740,740 700,720 C680,700 660,680 640,650Z'/>
<path d='M380,735 C430,710 480,700 530,705 L420,765Z'/>
<path d='M1020,290 C1100,260 1180,240 1230,245 C1260,250 1260,290 1240,300 C1150,310 1080,310 1020,290Z'/>
<path d='M1240,270 C1270,320 1240,420 1200,500 C1120,640 1020,760 960,810 C920,830 900,790 920,740 C980,640 1080,520 1150,420 C1190,360 1210,300 1240,270Z'/>
<path d='M1240,510 C1260,600 1280,700 1240,770 C1200,760 1180,720 1150,700 C1120,720 1100,740 1080,720 C1120,650 1180,580 1240,510Z'/>
<path d='M1425,155 C1480,140 1560,150 1600,170 C1630,200 1620,260 1580,320 C1540,390 1500,430 1470,470 L1420,470 C1450,400 1500,320 1540,240 C1500,210 1460,190 1425,155Z'/>
<path d='M1390,230 C1440,200 1480,230 1470,280 C1440,380 1420,480 1400,570 C1380,600 1350,590 1340,550 C1340,450 1360,330 1390,230Z'/>
<path d='M1300,680 C1400,630 1520,600 1600,600 C1640,610 1640,650 1600,660 C1500,680 1400,700 1320,700Z'/>
<path d='M1440,450 C1550,420 1650,420 1720,480 C1770,550 1750,680 1700,770 C1660,830 1560,830 1470,800 C1420,780 1390,760 1390,760 C1480,770 1560,770 1620,730 C1680,660 1690,560 1640,520 C1580,480 1500,480 1440,480Z'/>
</g></svg>
<div class='a' style='left:1917px;top:51px;width:3px;height:880px;background:#c8c8c8'></div>
<div class='a' style='left:1917px;top:51px;width:3px;height:574px;background:#666'></div>
</body></html>
